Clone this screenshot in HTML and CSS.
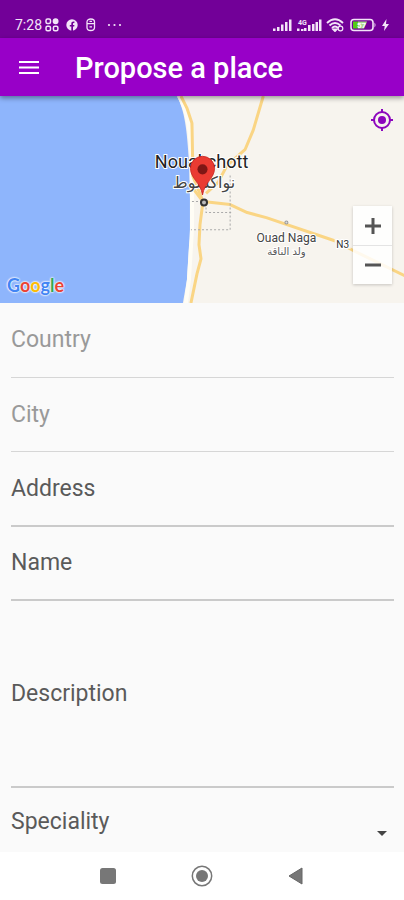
FILE: index.html
```html
<!DOCTYPE html>
<html lang="en">
<head>
<meta charset="utf-8">
<meta name="viewport" content="width=device-width, initial-scale=1">
<title>Propose a place</title>
<link rel="stylesheet" href="styles.css">
</head>
<body>
<div class="screen">
  <div class="status">
    <div class="status-group">
      <span class="clock">7:28</span>
      <svg width="14" height="14" viewBox="0 0 14 14" fill="none" stroke="currentColor" stroke-width="1.5"><rect x="1" y="1" width="4.5" height="4.5" rx="1.5"/><circle cx="10.6" cy="3.2" r="2.2" fill="currentColor"/><rect x="1" y="8.2" width="4.5" height="4.5" rx="1.5"/><rect x="8.4" y="8.2" width="4.5" height="4.5" rx="1.5"/></svg>
      <svg class="gap-l" width="12" height="12" viewBox="0 0 12 12"><circle cx="6" cy="6" r="5.7" fill="currentColor"/><path d="M5.3 12V7.5H3.8V5.9h1.5V4.7c0-1.6.9-2.3 3.1-2.1v1.5C7.3 4 7 4.200 7 4.900v1h1.400L8.200 7.500H7V12z" fill="#6f0096"/></svg>
      <svg class="gap-l" width="12" height="14" viewBox="0 0 12 14" fill="none" stroke="currentColor" stroke-width="1.300"><path d="M2 5.500V4a3.500 2.800 0 0 1 7.500 0v5.500q0 3-3.800 3T2 9.500z"/><path d="M2 5.700h7.500M4.500 3.300h2.500M4.500 8.800h2.500"/></svg>
      <svg class="gap-dots" width="16" height="4" viewBox="0 0 16 4" fill="currentColor"><circle cx="3" cy="2" r="1.100"/><circle cx="8.500" cy="2" r="1.100"/><circle cx="14" cy="2" r="1.100"/></svg>
    </div>
    <div class="status-group status-right">
      <svg width="20" height="14" viewBox="0 0 20 14" fill="currentColor"><path d="M1 10.500h2.500V13H1zM5 9h2.500v4H5zM9 6.500h2.500V13H9zM13 4h2.500v9H13zM17 1.500h2.500V13H17z"/></svg>
      <svg width="26" height="14" viewBox="0 0 26 14"><path d="M1 10.500h2.500V13H1zM5 11h2.500v2H5zM8 10h2.500v3H8zM12 7h2.500v6H12zM16 6h2.500v7H16zM19.500 4H22v9h-2.500zM23 1.500h2.500V13H23z" fill="currentColor"/><text class="net" x="2" y="7">4G</text></svg>
      <svg width="20" height="14" viewBox="0 0 20 14" fill="none" stroke="currentColor" stroke-width="1.900"><path d="M1 5q8-7.500 16 0M3.500 7.500q5.500-5 11 0M6 10q3-3 6 0"/><path d="M7.500 11.500 9 13l1.500-1.500z" fill="currentColor"/><circle cx="14.500" cy="10.500" r="2.300" stroke-width="1.200"/></svg>
      <svg width="27" height="14" viewBox="0 0 27 14"><rect x="1" y="1.500" width="22" height="11" rx="3" fill="none" stroke="currentColor" stroke-width="1.600"/><path d="M3 3.500h5v7H3z" fill="#55cc16"/><path d="M8 3.500h9l-3 7H8z" fill="#a8d88c"/><path d="M24.500 4.500q2 2.500 0 5z" fill="currentColor"/><text class="charge" x="7" y="10">57</text></svg>
      <svg width="9" height="12" viewBox="0 0 9 12" fill="currentColor"><path d="M5.500 0 1 7h2.700L3 12l5-7H5z"/></svg>
    </div>
  </div>
  <header class="bar">
    <button class="menu" type="button" aria-label="Menu">
      <svg width="20" height="16" viewBox="0 0 20 16" fill="currentColor"><path d="M0 2h20v2H0zM0 7.500h20v2H0zM0 13h20v2H0z"/></svg>
    </button>
    <h1>Propose a place</h1>
  </header>
  <section class="map" aria-label="Map">
    <svg class="map-art" viewBox="0 0 404 206" preserveAspectRatio="xMidYMid slice">
      <path fill="#f7f4ee" d="M0 0h404v206H0z"/>
      <path fill="#8eb5fc" d="M0 0h177C185 15 187 34 189 64L190 100 191 133 189 152 187 183 183 206H0z"/>
      <path fill="none" stroke="#fffdf5" stroke-width="4" d="M179 0C188 15 190 34 192 64v69l-3 50-3 23"/>
      <g fill="none" stroke="#fad584" stroke-width="3" stroke-linejoin="round">
        <path d="M181 0 187 12 192 27 193 80 203 105 200 128 199 148 201 162 197 177 191 206"/>
        <path d="M263 0 253 34 245 53 227 69 218 86 206 97"/>
        <path d="M193 92 203 105 230 108 247 116 266 121 334 144 353 154 404 179"/>
      </g>
      <path fill="none" stroke="#aaa" stroke-dasharray="2 2" d="M192 105h14v11h25M230 79v54h-39"/>
      <path fill="#f7f4ee" d="M334 139h16v13h-16z"/>
      <circle cx="286" cy="126" r="1.500" fill="#ddd" stroke="#999"/>
      <text class="city" x="155" y="72">Nouakchott</text>
      <text class="city-ar" x="204" y="92">نواكشوط</text>
      <text class="town" x="286" y="145">Ouad Naga</text>
      <text class="town-ar" x="286" y="158">ولد الناقة</text>
      <text class="road" x="342" y="151">N3</text>
      <circle cx="204" cy="106" r="3" fill="#bbb" stroke="#333" stroke-width="2"/>
      <path fill="#ea3b32" stroke="#c5221f" stroke-width=".8" d="M202.500 98.500C200.500 86 190.500 82 190.500 72a12 12 0 0 1 24 0c0 10-10 14-12 26.500z"/>
      <circle cx="202.500" cy="73" r="5" fill="#7e1715"/>
    </svg>
    <div class="google" role="img" aria-label="Google"><span class="g-blue">G</span><span class="g-red">o</span><span class="g-yellow">o</span><span class="g-blue">g</span><span class="g-green">l</span><span class="g-red">e</span></div>
    <button class="locate" type="button" aria-label="My location">
      <svg width="24" height="24" viewBox="0 0 24 24" fill="none" stroke="currentColor" stroke-width="2"><circle cx="12" cy="12" r="8"/><circle cx="12" cy="12" r="4" fill="currentColor" stroke="none"/><path d="M12 1v3M12 20v3M1 12h3M20 12h3"/></svg>
    </button>
    <div class="zoom">
      <button type="button" aria-label="Zoom in"><svg width="18" height="18" viewBox="0 0 18 18"><path d="M9 1v16M1 9h16" stroke="currentColor" stroke-width="3"/></svg></button>
      <button type="button" aria-label="Zoom out"><svg width="18" height="18" viewBox="0 0 18 18"><path d="M1 9h16" stroke="currentColor" stroke-width="3"/></svg></button>
    </div>
  </section>
  <form class="form">
    <div class="field muted"><label for="country">Country</label><input id="country" type="text" disabled></div>
    <div class="field muted"><label for="city">City</label><input id="city" type="text" disabled></div>
    <div class="field"><label for="address">Address</label><input id="address" type="text"></div>
    <div class="field"><label for="name">Name</label><input id="name" type="text"></div>
    <div class="field tall"><label for="description">Description</label><textarea id="description"></textarea></div>
    <div class="field last">
      <label for="speciality">Speciality</label><select id="speciality"><option value=""></option></select>
      <svg class="caret" width="10" height="5" viewBox="0 0 10 5"><path d="M0 0h10L5 5z" fill="#444"/></svg>
    </div>
  </form>
  <nav class="nav" aria-label="System">
    <button type="button" aria-label="Recent apps"><svg width="22" height="22" viewBox="0 0 22 22"><rect x="3" y="3" width="16" height="16" rx="2.500" fill="#777"/></svg></button>
    <button type="button" aria-label="Home"><svg width="22" height="22" viewBox="0 0 22 22"><circle cx="11" cy="11" r="9.700" fill="none" stroke="#777" stroke-width="1.500"/><circle cx="11" cy="11" r="6" fill="#777"/></svg></button>
    <button type="button" aria-label="Back"><svg width="22" height="22" viewBox="0 0 22 22"><path d="M4 11 17 3v16z" fill="#777" stroke="#666"/></svg></button>
  </nav>
</div>
</body>
</html>
```
FILE: styles.css
```css
* { box-sizing: border-box; }

body {
  margin: 0;
  background: #fff;
  color: #5a5a5a;
  font-family: Roboto, "Noto Sans", sans-serif;
}

button {
  display: flex;
  align-items: center;
  justify-content: center;
  padding: 0;
  border: 0;
  background: none;
  color: inherit;
}

.screen {
  display: flex;
  flex-direction: column;
  min-height: 100vh;
}

.status {
  display: flex;
  align-items: center;
  justify-content: space-between;
  height: 38px;
  padding: 11px 14px 0 15px;
  background: #720098;
  color: #f3e4f8;
}

.status-group { display: flex; align-items: center; }
.status-right { gap: 4px; }
.clock { margin-right: 3px; font-size: 14px; line-height: 16px; }
.gap-l { margin-left: 7px; }
.gap-dots { margin-left: 9px; }
.net { font-size: 7px; font-weight: 700; fill: currentColor; }
.charge { font-size: 8px; font-weight: 700; fill: #fff; }

.bar {
  display: flex;
  align-items: center;
  gap: 36px;
  height: 58px;
  padding: 0 19px;
  background: #9800c8;
  box-shadow: 0 2px 5px rgba(0, 0, 0, .4);
  color: #fff;
  z-index: 1;
}

h1 { margin: 0; padding-top: 2px; font-size: 29px; line-height: 36px; font-weight: 500; }

.map { position: relative; height: 207px; }
.map-art { display: block; width: 100%; height: 100%; }
.map-art text { stroke: #fff; stroke-width: 2px; paint-order: stroke; }
.city { font-size: 18px; fill: #222; }
.city-ar { font-family: "DejaVu Sans", sans-serif; font-size: 16px; fill: #444; text-anchor: middle; }
.town { font-size: 12px; fill: #444; text-anchor: middle; }
.town-ar { font-family: "DejaVu Sans", sans-serif; font-size: 10px; fill: #555; text-anchor: middle; }
.road { font-size: 10px; fill: #333; text-anchor: middle; }

.google {
  position: absolute;
  left: 7px;
  bottom: 7px;
  font-family: Lato, sans-serif;
  font-size: 18px;
  line-height: 22px;
  font-weight: 700;
  text-shadow: 0 0 2px #fff, 0 0 2px #fff, 0 0 2px #fff;
}
.g-blue { color: #4285f4; }
.g-red { color: #ea4335; }
.g-yellow { color: #fbbc05; }
.g-green { color: #34a853; }

.locate { position: absolute; top: 12px; right: 10px; color: #8c06bd; }

.zoom {
  position: absolute;
  top: 110px;
  right: 12px;
  width: 39px;
  background: rgba(255, 255, 255, .85);
  box-shadow: 0 1px 3px rgba(0, 0, 0, .2);
  color: #555;
}
.zoom button { width: 100%; height: 39px; }
.zoom button + button { border-top: 1px solid #e4e4e4; }

.form { padding: 0 10px 0 11px; background: #fafafa; }

.field {
  display: grid;
  height: 75px;
  border-bottom: 2px solid #cacaca;
  font-size: 23px;
  line-height: 28px;
}
.field.muted { border-bottom: 1px solid #d6d6d6; color: #999; }
.field.muted + .muted,
.field:not(.muted) + .field { height: 74px; }
.field.tall.tall { height: 187px; }
.field.last.last { height: 64px; padding-top: 4px; border: 0; }

.field > * { grid-area: 1 / 1; }
.field label { align-self: center; }
.field input,
.field textarea,
.field select {
  width: 100%;
  height: 100%;
  padding: 0;
  border: 0;
  outline: 0;
  background: none;
  color: inherit;
  font: inherit;
  resize: none;
  appearance: none;
}
.caret { align-self: end; justify-self: end; margin: 0 7px 16px; pointer-events: none; }

.nav {
  display: flex;
  flex: 1;
  align-items: center;
  justify-content: center;
  gap: 72px;
  min-height: 48px;
  background: #fff;
}
```
